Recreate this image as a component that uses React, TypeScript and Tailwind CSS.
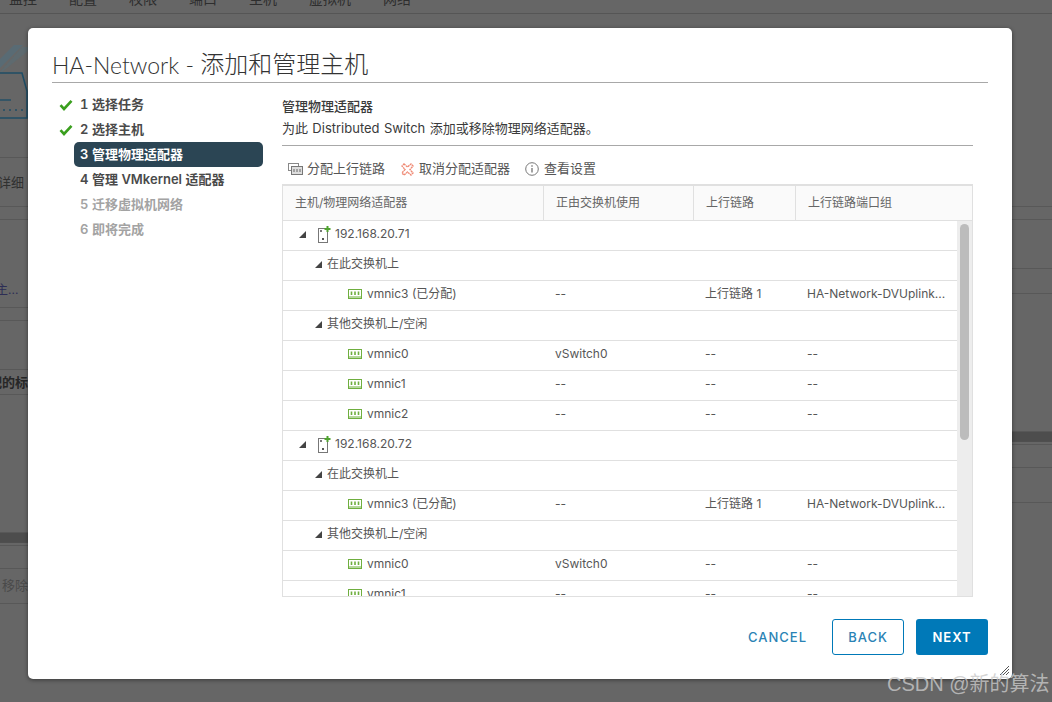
import React from "react";

const font = "font-['Inter','Noto_Sans_CJK_SC',sans-serif]";

function Check() {
  return (
    <svg width="14" height="12" viewBox="0 0 14 12" className="shrink-0">
      <path d="M1.5 6.2 L5 10 L12.5 1.8" fill="none" stroke="#3a9f1e" strokeWidth="2.6" />
    </svg>
  );
}
function Tri() {
  return (
    <svg width="7" height="7" viewBox="0 0 7 7" className="shrink-0">
      <path d="M7 0 V7 H0 Z" fill="#444" />
    </svg>
  );
}
function HostIcon() {
  return (
    <svg width="13" height="17" viewBox="0 0 13 17" className="shrink-0">
      <rect x="0.5" y="2.5" width="9" height="14" fill="#fff" stroke="#777" />
      <rect x="2" y="4" width="2" height="2" fill="#777" />
      <rect x="4" y="12" width="2" height="2" fill="#555" />
      <path d="M9.5 0 V6 M6.5 3 H12.5" stroke="#4fa32f" strokeWidth="2" />
    </svg>
  );
}
function NicIcon() {
  return (
    <svg width="14" height="10" viewBox="0 0 14 10" className="shrink-0">
      <rect x="0.5" y="0.5" width="13" height="9" fill="#fff" stroke="#6fae3f" />
      <path d="M3.5 2.5 V6 M7 2.5 V6 M10.5 2.5 V6" stroke="#6fae3f" strokeWidth="1.6" />
      <path d="M1 8 H13" stroke="#6fae3f" strokeWidth="1" />
    </svg>
  );
}
function UplinkIcon() {
  return (
    <svg width="15" height="13" viewBox="0 0 15 13" className="shrink-0">
      <rect x="0.5" y="0.5" width="10" height="7" fill="#fff" stroke="#888" />
      <rect x="3.5" y="3.5" width="11" height="8" fill="#ddd" stroke="#777" />
      <path d="M6 6 V9 M9 6 V9 M12 6 V9" stroke="#666" />
    </svg>
  );
}
function CrossIcon() {
  return (
    <svg width="13" height="13" viewBox="0 0 13 13" className="shrink-0">
      <path
        d="M3 1 L6.5 4 L10 1 L12 3 L9 6.5 L12 10 L10 12 L6.5 9 L3 12 L1 10 L4 6.5 L1 3 Z"
        fill="#fff"
        stroke="#ef8a75"
        strokeWidth="1.4"
        strokeDasharray="2 0.6"
      />
    </svg>
  );
}
function InfoIcon() {
  return (
    <svg width="14" height="14" viewBox="0 0 14 14" className="shrink-0">
      <circle cx="7" cy="7" r="6.3" fill="none" stroke="#777" />
      <path d="M7 6 V10.5 M7 3.2 V4.8" stroke="#666" strokeWidth="1.2" />
    </svg>
  );
}
function Logo() {
  return (
    <svg width="28" height="75" viewBox="0 0 28 75" className="block">
      <path d="M0 14 L14 0 L23 0 L0 23 Z" fill="#546e7b" opacity="0.7" />
      <path d="M0 27 L22 2 L28 2 L28 6 L2 27 Z" fill="#546e7b" opacity="0.45" />
      <path d="M-2 28 H22 L27 46 V73 H-2" fill="none" stroke="#1f4e66" strokeWidth="1.6" />
      <path d="M0 55 H11" stroke="#1f4e66" strokeWidth="1.4" />
      <path d="M3 65 H26" stroke="#1f4e66" strokeWidth="1.6" strokeDasharray="2 4" />
    </svg>
  );
}

type Row = { kind: "host" | "group" | "nic"; name: string; a?: string; b?: string; c?: string };
const unit: Row[] = [
  { kind: "group", name: "在此交换机上" },
  { kind: "nic", name: "vmnic3 (已分配)", a: "--", b: "上行链路 1", c: "HA-Network-DVUplink..." },
  { kind: "group", name: "其他交换机上/空闲" },
  { kind: "nic", name: "vmnic0", a: "vSwitch0", b: "--", c: "--" },
  { kind: "nic", name: "vmnic1", a: "--", b: "--", c: "--" },
  { kind: "nic", name: "vmnic2", a: "--", b: "--", c: "--" },
];
const rows: Row[] = [
  { kind: "host", name: "192.168.20.71" },
  ...unit,
  { kind: "host", name: "192.168.20.72" },
  ...unit,
];

function TableRow({ r }: { r: Row }) {
  return (
    <div className="flex h-[30px] shrink-0 items-center border-b border-[#e0e0e0] pb-[3px] text-[12px] text-[#565656]">
      <div className="flex w-[260px] shrink-0 items-center">
        {r.kind === "host" && (
          <>
            <span className="ml-[16px]"><Tri /></span>
            <span className="ml-[12px]"><HostIcon /></span>
            <span className="ml-[4px]">{r.name}</span>
          </>
        )}
        {r.kind === "group" && (
          <>
            <span className="ml-[32px]"><Tri /></span>
            <span className="ml-[5px]">{r.name}</span>
          </>
        )}
        {r.kind === "nic" && (
          <>
            <span className="ml-[65px]"><NicIcon /></span>
            <span className="ml-[5px]">{r.name}</span>
          </>
        )}
      </div>
      <div className="w-[150px] shrink-0 pl-[12px]">{r.a}</div>
      <div className="w-[102px] shrink-0 pl-[12px]">{r.b}</div>
      <div className="flex-1 whitespace-nowrap pl-[12px]">{r.c}</div>
    </div>
  );
}

function Step({ n, done, active, muted }: { n: string; done?: boolean; active?: boolean; muted?: boolean }) {
  return (
    <div className="flex h-[25px] items-center">
      <div className="flex w-[22px] shrink-0 justify-center pl-[6px]">{done && <Check />}</div>
      <div
        className={`flex h-[25px] w-[189px] items-center rounded-[5px] pl-[6px] text-[13px] font-semibold tabular-nums ${
          active ? "bg-[#2b4554] text-white" : muted ? "text-[#a3a3a3]" : "text-[#4a4a4a]"
        }`}
      >
        {n}
      </div>
    </div>
  );
}

function BgLine({ h, dark, children }: { h: number; dark?: boolean; children?: React.ReactNode }) {
  return (
    <div
      style={{ height: h }}
      className={`flex items-center overflow-hidden whitespace-nowrap border-b ${
        dark ? "border-[#4f4f4f] bg-[#4d4d4d]" : "border-[#585858]"
      }`}
    >
      {children}
    </div>
  );
}

export default function App() {
  return (
    <div className={`relative h-[702px] w-[1052px] overflow-hidden bg-[#666666] ${font}`}>
      {/* page behind the dialog */}
      <div className="flex h-[14px] items-end gap-[32px] overflow-hidden border-b border-[#555] pb-[7px] pl-[9px] text-[14px] leading-[14px] text-[#2e2e2e]">
        <span>监控</span>
        <span>配置</span>
        <span>权限</span>
        <span>端口</span>
        <span>主机</span>
        <span>虚拟机</span>
        <span>网络</span>
      </div>
      <div className="flex justify-between">
        <div className="w-[28px] text-[13px] text-[#303030]">
          <div className="h-[31px]" />
          <Logo />
          <BgLine h={38} />
          <BgLine h={49}><span className="ml-[-2px] mt-[2px]">详细</span></BgLine>
          <BgLine h={13} />
          <BgLine h={88}><span className="ml-[-4px] mt-[52px] text-[12px] text-[#2d2d55]">主...</span></BgLine>
          <BgLine h={13} />
          <BgLine h={49} />
          <BgLine h={25}><span className="ml-[-11px] mt-[1px] font-semibold text-[#262626]">配的标</span></BgLine>
          <BgLine h={138} />
          <BgLine h={10} dark />
          <BgLine h={3} />
          <BgLine h={23} />
          <BgLine h={35}><span className="ml-[2px] text-[#4a4a4a]">移除</span></BgLine>
        </div>
        <div className="w-[40px]">
          <BgLine h={193} />
          <BgLine h={13} />
          <BgLine h={49} />
          <BgLine h={25} />
          <BgLine h={138} />
          <BgLine h={10} dark />
          <BgLine h={3} />
          <BgLine h={23} />
          <BgLine h={35} />
        </div>
      </div>

      {/* dialog */}
      <div className="absolute left-[28px] top-[28px] flex h-[651px] w-[984px] flex-col rounded-[5px] bg-white px-[24px] shadow-[0_1px_4px_rgba(0,0,0,0.45)]">
        <div className="flex h-[55px] shrink-0 items-end whitespace-pre border-b border-[#a8a8a8] text-[24px] leading-[34px] text-[#333]">
          <span className="font-['Lato','Noto_Sans_CJK_SC',sans-serif] text-[23px] font-light">{"HA-Network - "}</span>
          <span className="font-light">添加和管理主机</span>
        </div>
        <div className="flex min-h-0 flex-1">
          <div className="w-[230px] shrink-0 pt-[9px]">
            <Step n="1 选择任务" done />
            <Step n="2 选择主机" done />
            <Step n="3 管理物理适配器" active />
            <Step n="4 管理 VMkernel 适配器" />
            <Step n="5 迁移虚拟机网络" muted />
            <Step n="6 即将完成" muted />
          </div>
          <div className="flex min-w-0 flex-1 flex-col">
            <div className="flex h-[63px] w-[691px] shrink-0 flex-col border-b border-[#a8a8a8] pt-[12px] text-[13px] leading-[22px] text-[#3a3a3a]">
              <div className="font-medium">管理物理适配器</div>
              <div className="[word-spacing:0.7px]">为此 Distributed Switch 添加或移除物理网络适配器。</div>
            </div>
            <div className="flex h-[38px] shrink-0 items-center pl-[6px] pt-[8px] text-[13px] text-[#565656]">
              <UplinkIcon />
              <span className="ml-[4px]">分配上行链路</span>
              <span className="ml-[16px]"><CrossIcon /></span>
              <span className="ml-[5px]">取消分配适配器</span>
              <span className="ml-[15px]"><InfoIcon /></span>
              <span className="ml-[5px]">查看设置</span>
            </div>
            <div className="flex h-[413px] w-[691px] shrink-0 flex-col overflow-hidden border-x border-b border-t-2 border-[#e0e0e0]">
              <div className="flex h-[35px] shrink-0 items-center border-b border-[#e0e0e0] bg-[#fafafa] text-[12px] text-[#666]">
                <div className="flex h-full w-[261px] shrink-0 items-center border-r border-[#e0e0e0] pl-[12px]">主机/物理网络适配器</div>
                <div className="flex h-full w-[150px] shrink-0 items-center border-r border-[#e0e0e0] pl-[12px]">正由交换机使用</div>
                <div className="flex h-full w-[102px] shrink-0 items-center border-r border-[#e0e0e0] pl-[12px]">上行链路</div>
                <div className="flex h-full flex-1 items-center pl-[12px]">上行链路端口组</div>
              </div>
              <div className="flex min-h-0 flex-1">
                <div className="flex min-w-0 flex-1 flex-col overflow-hidden">
                  {rows.map((r, i) => (
                    <TableRow key={i} r={r} />
                  ))}
                </div>
                <div className="w-[15px] shrink-0 bg-[#ededed] pl-[3px] pt-[3px]">
                  <div className="h-[216px] w-[9px] rounded-full bg-[#bcbcbc]" />
                </div>
              </div>
            </div>
            <div className="flex flex-1 items-start justify-end pt-[22px] text-[13px] font-medium tracking-[1px]">
              <button className="mr-[25px] flex h-[36px] items-center pt-[1px] text-[#2a83b5]">CANCEL</button>
              <button className="mr-[12px] flex h-[36px] w-[72px] items-center justify-center rounded-[3px] border border-[#0079b8] pt-[1px] text-[#2a83b5]">BACK</button>
              <button className="flex h-[36px] w-[72px] items-center justify-center rounded-[3px] bg-[#0079b8] pt-[1px] font-semibold text-white">NEXT</button>
            </div>
          </div>
        </div>
        <svg width="9" height="9" viewBox="0 0 9 9" className="absolute bottom-[4px] right-[3px]">
          <path d="M9 0 L0 9 M9 3 L3 9 M9 6 L6 9" stroke="#555" strokeWidth="1" />
        </svg>
      </div>

      <div className="absolute left-[887px] top-[671px] whitespace-nowrap font-['Liberation_Sans','Noto_Sans_CJK_SC',sans-serif] text-[20px] leading-[26px] text-[#c9c9c9]/80">
        CSDN @新的算法
      </div>
    </div>
  );
}
